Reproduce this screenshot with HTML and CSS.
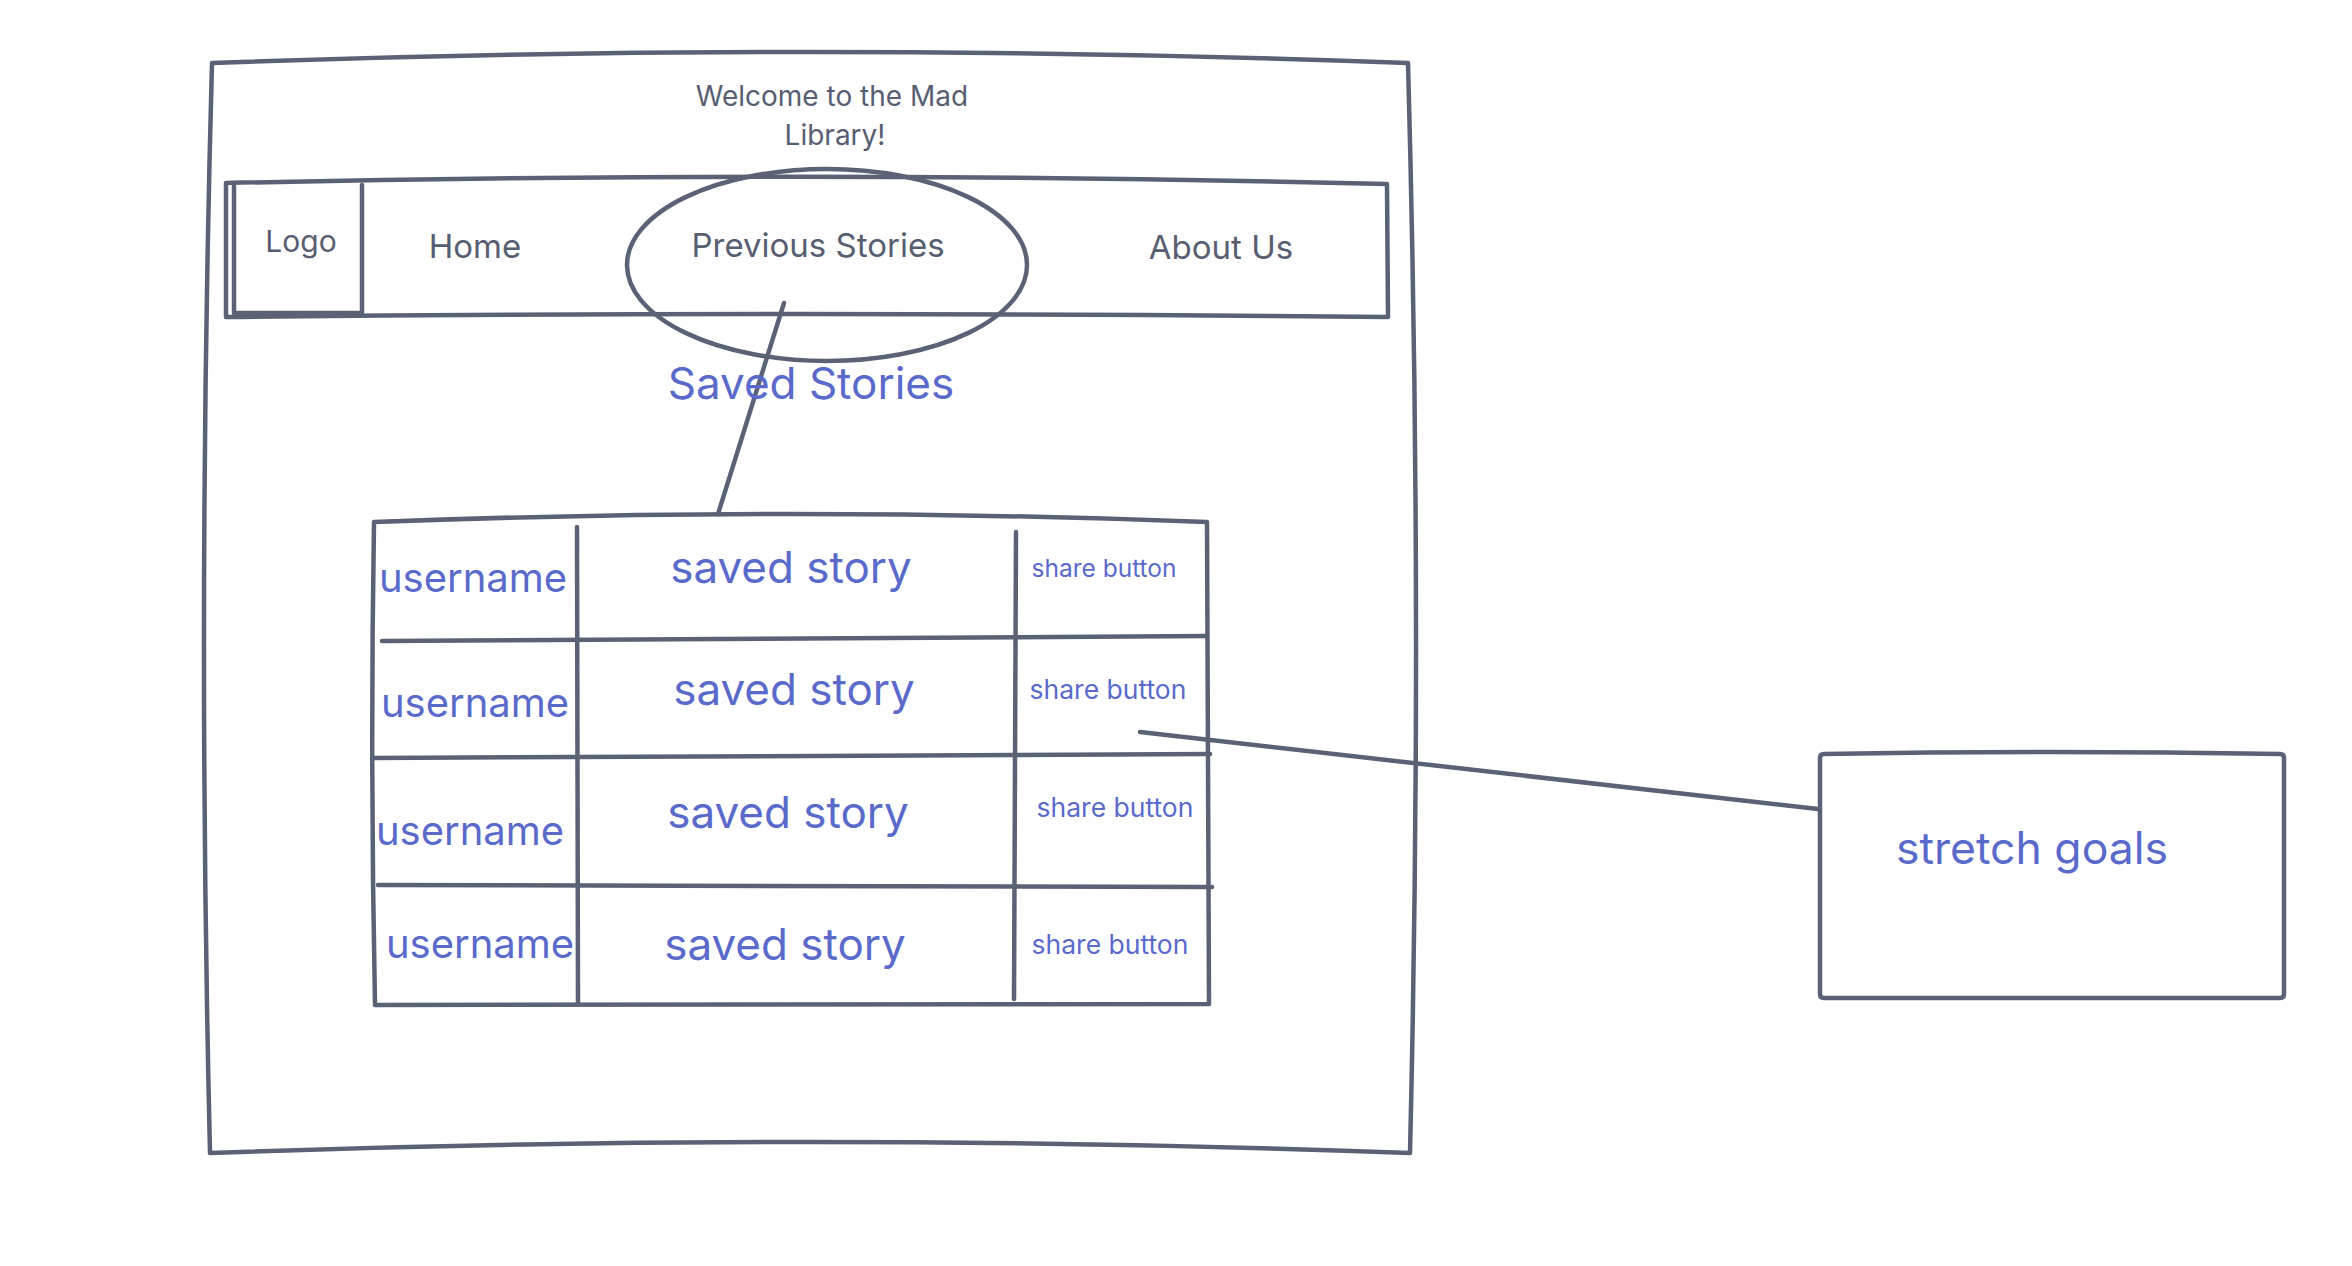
FILE: index.html
```html
<!DOCTYPE html>
<html lang="en">
<head>
    <meta charset="UTF-8">
    <meta name="viewport" content="width=device-width, initial-scale=1.0">
    <title>Mad Library - wireframe</title>
    <link rel="stylesheet" href="styles.css">
</head>
<body>
    <div class="board">
        <svg class="sketch" width="2352" height="1266" viewBox="0 0 2352 1266">
            <!-- page frame -->
            <g class="stroke">
                <path d="M212 63 Q810 41 1408 63 Q1423 608 1410 1153 Q810 1131 210 1153 Q197 608 212 63 Z"/>
            </g>
            <text class="label title" x="832" y="106">Welcome to the Mad</text>
            <text class="label title" x="835" y="145">Library!</text>

            <!-- nav bar -->
            <g class="stroke">
                <path d="M226 183 Q806 170 1387 184 L1388 317 Q806 311 226 317 Z"/>
                <path d="M234 186 L234 313 L362 313 L362 185"/>
            </g>
            <text class="label logo" x="301" y="252">Logo</text>
            <text class="label nav" x="475" y="258">Home</text>
            <text class="label nav" x="818" y="257">Previous Stories</text>
            <text class="label nav" x="1221" y="259">About Us</text>

            <!-- callout on previous stories -->
            <g class="stroke">
                <ellipse cx="827" cy="265" rx="200" ry="96"/>
                <path d="M784 303 L718 514"/>
            </g>
            <text class="label blue heading" x="811" y="399">Saved Stories</text>

            <!-- saved stories table -->
            <g class="stroke">
                <path d="M374 522 Q790 506 1207 522 L1209 1004 L375 1005 Q370 763 374 522 Z"/>
                <path d="M577 527 L578 1003"/>
                <path d="M1016 532 L1014 999"/>
                <path d="M382 641 L1207 636"/>
                <path d="M372 758 L1210 754"/>
                <path d="M378 885 L1212 887"/>
            </g>
            <text class="label blue cell-name" x="473" y="592">username</text>
            <text class="label blue cell-story" x="791" y="583">saved story</text>
            <text class="label blue cell-share small" x="1104" y="577">share button</text>

            <text class="label blue cell-name" x="475" y="717">username</text>
            <text class="label blue cell-story" x="794" y="705">saved story</text>
            <text class="label blue cell-share" x="1108" y="699">share button</text>

            <text class="label blue cell-name" x="470" y="845">username</text>
            <text class="label blue cell-story" x="788" y="828">saved story</text>
            <text class="label blue cell-share" x="1115" y="817">share button</text>

            <text class="label blue cell-name" x="480" y="958">username</text>
            <text class="label blue cell-story" x="785" y="960">saved story</text>
            <text class="label blue cell-share" x="1110" y="954">share button</text>

            <!-- stretch goals note -->
            <g class="stroke">
                <path d="M1140 732 L1818 809"/>
                <path d="M1824 754 Q2052 750 2280 754 Q2284 754 2284 758 L2284 994 Q2284 998 2280 998 L1824 998 Q1820 998 1820 994 L1820 758 Q1820 754 1824 754 Z"/>
            </g>
            <text class="label blue goal" x="2032" y="864">stretch goals</text>
        </svg>
    </div>
</body>
</html>
```

FILE: styles.css
```css
body {
    margin: 0;
    background-color: #ffffff;
    font-family: 'Inter', 'Liberation Sans', sans-serif;
}
.board {
    width: 2352px;
    height: 1266px;
    overflow: hidden;
}
.sketch {
    display: block;
}
.stroke {
    fill: none;
    stroke: #5b6275;
    stroke-width: 4.5;
    stroke-linecap: round;
    stroke-linejoin: round;
}
.label {
    font-family: 'Inter', 'Liberation Sans', sans-serif;
    fill: #585e72;
    text-anchor: middle;
}
.blue {
    fill: #5a6acb;
}
.title {
    font-size: 28px;
}
.logo {
    font-size: 30px;
}
.nav {
    font-size: 33px;
}
.heading {
    font-size: 44px;
}
.cell-name {
    font-size: 40px;
}
.cell-story {
    font-size: 44px;
}
.cell-share {
    font-size: 26.5px;
}
.cell-share.small {
    font-size: 24.5px;
}
.goal {
    font-size: 44.5px;
}
```
